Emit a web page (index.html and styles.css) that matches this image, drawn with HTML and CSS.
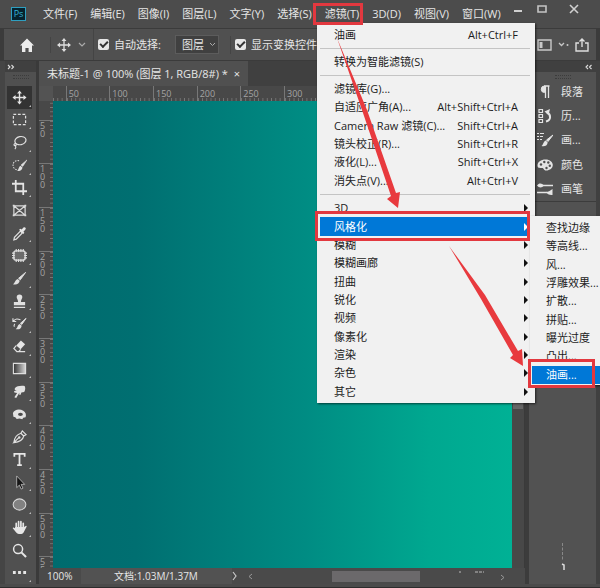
FILE: index.html
```html
<!DOCTYPE html>
<html lang="zh-CN">

<head>
    <meta charset="UTF-8">
    <meta name="viewport" content="width=device-width, initial-scale=1.0">
    <title>未标题-1</title>
    <link rel="stylesheet" href="styles.css">
</head>

<body>
    <div class="window">
        <header class="menubar">
            <span class="logo">Ps</span>
            <nav class="menus">
                <button>文件(F)</button>
                <button>编辑(E)</button>
                <button>图像(I)</button>
                <button>图层(L)</button>
                <button>文字(Y)</button>
                <button>选择(S)</button>
                <button class="open">滤镜(T)</button>
                <button>3D(D)</button>
                <button>视图(V)</button>
                <button>窗口(W)</button>
            </nav>
            <div class="window-buttons">
                <button aria-label="最小化"><svg width="12" height="12" viewBox="0 0 12 12"><path d="M2 8h8" stroke="#d0d0d0" stroke-width="2"/></svg></button>
                <button aria-label="还原"><svg width="12" height="12" viewBox="0 0 12 12"><path d="M2 3h8v6H2z" fill="none" stroke="#c4c4c4" stroke-width="1.6"/></svg></button>
                <button aria-label="关闭"><svg width="12" height="12" viewBox="0 0 12 12"><path d="M2 2l8 8M10 2l-8 8" stroke="#d0d0d0" stroke-width="1.6"/></svg></button>
            </div>
        </header>

        <div class="options">
            <button class="home" aria-label="主页"><svg width="16" height="16" viewBox="0 0 16 16"><path d="M8 1.5L15 8.6h-2V15H9.6v-4H6.4v4H3V8.6H1z" fill="#ececec"/></svg></button>
            <button class="current-tool" aria-label="移动工具">
                <svg width="14" height="14" viewBox="0 0 16 16"><path d="M8 2v12M2 8h12" stroke="#dedede" stroke-width="1.5"/><path d="M8 0l2.8 3.5H5.2zM8 16l2.8-3.5H5.2zM0 8l3.5-2.8v5.6zM16 8l-3.5-2.8v5.6z" fill="#dedede"/></svg>
                <svg width="8" height="6" viewBox="0 0 8 6"><path d="M1 1l3 3 3-3" fill="none" stroke="#aaa" stroke-width="1.2"/></svg>
            </button>
            <label class="check"><input type="checkbox" checked>自动选择:</label>
            <select class="target" aria-label="自动选择">
                <option>图层</option>
                <option>组</option>
            </select>
            <label class="check second"><input type="checkbox" checked>显示变换控件</label>
            <div class="options-right">
                <button aria-label="工作区"><svg width="16" height="14" viewBox="0 0 16 14"><path d="M1 2h13v10H1z" fill="none" stroke="#c8c8c8" stroke-width="1.4"/><path d="M2.5 4h3v6h-3z" fill="#c8c8c8"/></svg></button>
                <button aria-label="更多"><svg width="12" height="8" viewBox="0 0 12 8"><path d="M1 2l2.5 2.5L6 2" fill="none" stroke="#c8c8c8" stroke-width="1.3"/><circle cx="9.5" cy="4" r="1" fill="#c8c8c8"/></svg></button>
                <button aria-label="共享"><svg width="14" height="14" viewBox="0 0 14 14"><path d="M4 5H1v8h12V5h-3M7 9V1M4.5 3.5L7 1l2.5 2.5" fill="none" stroke="#dedede" stroke-width="1.4"/></svg></button>
            </div>
        </div>

        <main class="workspace">
            <aside class="toolbox">
                <div class="dock-head"><svg width="8" height="6" viewBox="0 0 8 6"><path d="M1 1l2 2-2 2M4.5 1l2 2-2 2" fill="none" stroke="#ddd" stroke-width="1.1"/></svg></div>
                <div class="grip"></div>
                <div class="tools">
                    <button class="tool active" aria-label="移动"><svg viewBox="0 0 16 16"><path d="M8 2v12M2 8h12" stroke="#e4e4e4" stroke-width="1.5"/><path d="M8 .5l2.6 3.3H5.4zM8 15.5l2.6-3.3H5.4zM.5 8l3.3-2.6v5.2zM15.5 8l-3.3-2.6v5.2z" fill="#e4e4e4"/></svg></button>
                    <button class="tool" aria-label="矩形选框"><svg viewBox="0 0 16 16"><path d="M1.5 2.5h13v11h-13z" fill="none" stroke="#e0e0e0" stroke-width="1.3" stroke-dasharray="3 1.8"/></svg></button>
                    <button class="tool" aria-label="套索"><svg viewBox="0 0 16 16"><ellipse cx="9" cy="6" rx="6" ry="4.3" fill="none" stroke="#e0e0e0" stroke-width="1.3" transform="rotate(-12 9 6)"/><path d="M4 9c-2 0-2.5 2-1 2.3 2 .3 2-2 .6-2.3M3.5 11.5c1 1 .6 2.5-.5 3.5" fill="none" stroke="#e0e0e0" stroke-width="1.2"/></svg></button>
                    <button class="tool" aria-label="快速选择"><svg viewBox="0 0 16 16"><path d="M5 12.5A5 5 0 1 1 8 3" fill="none" stroke="#e0e0e0" stroke-width="1.1" stroke-dasharray="1.6 1.2"/><path d="M16 2l-4.600 7-1.8-1.5z" fill="#e0e0e0" stroke="#e0e0e0" stroke-width=".6"/><path d="M9 8.3l2.2 1.9c-.5 3.3-3 4-5.7 3.3 1.7-.8 1.5-4.300 3.5-5.200z" fill="#e0e0e0"/></svg></button>
                    <button class="tool" aria-label="裁剪"><svg viewBox="0 0 16 16"><path d="M4 0v12h12M0 4h12v12" fill="none" stroke="#e4e4e4" stroke-width="1.9"/></svg></button>
                    <button class="tool plain" aria-label="图框"><svg viewBox="0 0 16 16"><path d="M2 3h12v10H2zM2 3l12 10M14 3L2 13" fill="none" stroke="#dadada" stroke-width="1.3"/><path d="M.8 1.8h2v2h-2zM13.2 1.8h2v2h-2zM.8 12.2h2v2h-2zM13.2 12.2h2v2h-2z" fill="#dadada"/></svg></button>
                    <button class="tool" aria-label="吸管"><svg viewBox="0 0 16 16"><path d="M9 5.5l2 2L4.5 14l-2.5.7L2.6 12z" fill="none" stroke="#e0e0e0" stroke-width="1.3"/><path d="M7.500 4l1.500-1 1.300.700L12 1.800c1.600-1.500 3.600.5 2.300 2L12.200 6l1 1.200-1.200 1.300z" fill="#e6e6e6"/></svg></button>
                    <button class="tool" aria-label="修补"><svg viewBox="0 0 16 16"><rect x="2" y="3" width="12" height="10" rx="2" fill="#6c6c6c" stroke="#e0e0e0" stroke-width="1.4"/><path d="M4.500 1v3M7 1v3M9.500 1v3M12 1v3M4.500 12v3M7 12v3M9.500 12v3M12 12v3M0 5.500h3M0 8h3M0 10.500h3M13 5.500h3M13 8h3M13 10.500h3" stroke="#e0e0e0" stroke-width="1.2"/></svg></button>
                    <button class="tool" aria-label="画笔"><svg viewBox="0 0 16 16"><path d="M14.5 1.5L8.800 9.400 7 7.800z" fill="#e0e0e0" stroke="#e0e0e0"/><path d="M6.200 8.600l2 1.900c-.4 3.400-3.500 4.400-7.200 3.600 2.500-1 2-4.700 5.200-5.500z" fill="#e0e0e0"/></svg></button>
                    <button class="tool" aria-label="仿制图章"><svg viewBox="0 0 16 16"><path d="M5 3.500a3 3 0 0 1 6 0c0 1.800-1.500 2.500-1.500 5H14v3.500H2V8.500h4.500C6.500 6 5 5.300 5 3.500zM2 13.500h12V15H2z" fill="#e0e0e0"/></svg></button>
                    <button class="tool" aria-label="历史记录画笔"><svg viewBox="0 0 16 16"><path d="M15 2.500L10.500 9 9 7.800z" fill="#e0e0e0" stroke="#e0e0e0"/><path d="M8.300 8.600l2 1.700c-.3 3.200-2.800 4.500-6.300 3.700 2.300-1 1.500-4.400 4.300-5.400z" fill="#e0e0e0"/><path d="M1.500 5.500C4 2.500 6 3 9 4M1 2.500v3.300h3.500M3 8.500c-1 1-1 2-.5 3" fill="none" stroke="#e0e0e0" stroke-width="1.2"/></svg></button>
                    <button class="tool" aria-label="橡皮擦"><svg viewBox="0 0 16 16"><path d="M9.500 1.500l4.500 4L9.200 11 4.500 7z" fill="#e6e6e6"/><path d="M4.500 7L2 10l3.200 3.500h2L9.200 11M7 13.500h7" fill="none" stroke="#e0e0e0" stroke-width="1.3"/></svg></button>
                    <button class="tool" aria-label="渐变"><svg viewBox="0 0 16 16"><defs><linearGradient id="grad"><stop offset="0" stop-color="#333"/><stop offset="1" stop-color="#d8d8d8"/></linearGradient></defs><path d="M1.500 2.500h13v11h-13z" fill="url(#grad)" stroke="#dedede" stroke-width="1.2"/></svg></button>
                    <button class="tool" aria-label="涂抹"><svg viewBox="0 0 16 16"><path d="M3 4.500C5 2 9 1.500 13.500 2c1 2 .8 4.500-.5 6.500l-3 .5-.8 2.500-1.600 0 .3-2.300L4.500 15 2.500 14l3-4.500L2.500 9l-.3-1.500L5 7.300 3 6.500z" fill="#e2e2e2"/></svg></button>
                    <button class="tool" aria-label="海绵"><svg viewBox="0 0 16 16"><path d="M1 6.500C2.500 2.500 8 1.500 12 4c2.500 1.600 3.500 4 2.500 7l-2.500.5-1 1.500-3-.8-3 .5-1.500-1.700-2-.5z" fill="#e2e2e2"/><ellipse cx="9" cy="7.800" rx="2.600" ry="1.700" fill="#4a4a4a"/></svg></button>
                    <button class="tool" aria-label="钢笔"><svg viewBox="0 0 16 16"><path d="M2 14.500C2.500 9 4.500 6 9.500 4.500l3 3C11.500 12 8 13.800 2 14.500L7 9.500M9.500 4.500L11 2l4 4-2.500 1.500" fill="none" stroke="#e0e0e0" stroke-width="1.3"/><circle cx="7.700" cy="9" r="1.300" fill="#e0e0e0"/></svg></button>
                    <button class="tool" aria-label="文字"><svg viewBox="0 0 16 16"><path d="M2.500 5V2h11v3M8 2v12M5.500 14h5" fill="none" stroke="#e6e6e6" stroke-width="1.9"/></svg></button>
                    <button class="tool" aria-label="路径选择"><svg viewBox="0 0 16 16"><path d="M5 1l8.500 9H9.700l2 4-1.900 1-2-4.200L5 13.500z" fill="#161616" stroke="#c8c8c8" stroke-width=".8"/></svg></button>
                    <button class="tool" aria-label="椭圆"><svg viewBox="0 0 16 16"><ellipse cx="8" cy="8" rx="6.800" ry="6" fill="#818181" stroke="#d8d8d8" stroke-width="1.1"/></svg></button>
                    <button class="tool" aria-label="抓手"><svg viewBox="0 0 16 16"><path d="M4.500 9V3.600M7 8V1.800M9.500 8V1.800M12 9V3.500" stroke="#e6e6e6" stroke-width="1.800" stroke-linecap="round"/><path d="M3.600 7.500h9.300L15 6.200c.8.2.8.800.4 1.300L12.500 13c-1 2.500-6 2.700-8 .3L.8 8.800C.8 7.700 2 7.500 3 8.800z" fill="#e6e6e6"/></svg></button>
                    <button class="tool plain" aria-label="缩放"><svg viewBox="0 0 16 16"><circle cx="6.500" cy="6.500" r="4.800" fill="none" stroke="#e6e6e6" stroke-width="1.6"/><path d="M10 10l5 5" stroke="#e6e6e6" stroke-width="2.2"/></svg></button>
                    <button class="tool" aria-label="编辑工具栏"><svg viewBox="0 0 16 16"><path d="M1 6.500h3v3H1zM6.500 6.500h3v3h-3zM12 6.500h3v3h-3z" fill="#e6e6e6"/></svg></button>
                </div>
            </aside>

            <section class="document">
                <div class="tabs">
                    <button class="tab">未标题-1 @ 100% (图层 1, RGB/8#) * <span class="close">×</span></button>
                </div>
                <div class="view">
                    <div class="corner"></div>
                    <div class="ruler top">
                        <div class="scale">
                            <span></span><span>50</span><span>100</span><span>150</span><span>200</span><span>250</span><span>300</span><span></span><span></span><span></span><span></span><span></span>
                        </div>
                    </div>
                    <div class="ruler left">
                        <div class="scale">
                            <span></span><span>50</span><span>100</span><span>150</span><span>200</span><span>250</span><span>300</span><span>350</span><span>400</span><span>450</span><span>500</span><span>55</span>
                        </div>
                    </div>
                    <div class="canvas"></div>
                    <div class="vscroll"><div class="vthumb"></div></div>
                </div>
                <footer class="status">
                    <span class="zoom">100%</span>
                    <span class="size">文档:1.03M/1.37M</span>
                    <svg class="more" width="6" height="10" viewBox="0 0 6 10"><path d="M1 1l3 4-3 4" fill="none" stroke="#c8c8c8" stroke-width="1.2"/></svg>
                    <div class="hscroll">
                        <svg width="5" height="7" viewBox="0 0 5 7"><path d="M4 1L1 3.500 4 6" fill="none" stroke="#999"/></svg>
                        <div class="track"><div class="hthumb"></div></div>
                        <svg width="60" height="12" viewBox="0 0 60 12"><path d="M5 2h2" stroke="#bbb"/><path d="M21 2h9" stroke="#bbb" stroke-dasharray="3 1"/><path d="M47 5l3 2.500-3 2.500" fill="none" stroke="#999"/></svg>
                    </div>
                </footer>
            </section>

            <aside class="panels">
                <div class="dock-head right"><svg width="8" height="6" viewBox="0 0 8 6"><path d="M3 1L1 3l2 2M6.500 1l-2 2 2 2" fill="none" stroke="#ddd" stroke-width="1.1"/></svg></div>
                <div class="grip"></div>
                <div class="panel-list">
                    <button><svg viewBox="0 0 16 16"><path d="M7.500 2v6.500a3.200 3.200 0 0 1 0-6.500z" fill="#e4e4e4" stroke="#e4e4e4"/><path d="M8.500 2v12M11.500 2v12M7 2h5.500" stroke="#e4e4e4" stroke-width="1.3"/></svg>段落</button>
                    <button><svg viewBox="0 0 16 16"><path d="M2 1.500h3.500v3H2zM2 6.500h3.500v3H2zM2 11.500h3.500v3H2z" fill="none" stroke="#e4e4e4" stroke-width="1.2"/><path d="M9 13.500c5.500-1.500 5-7 1-9" fill="none" stroke="#e4e4e4" stroke-width="2"/><path d="M7.500 3.500L13 1l-1.500 6z" fill="#e4e4e4"/></svg>历...</button>
                    <button><svg viewBox="0 0 16 16"><path d="M0 1.500h2M3 1.500h4M0 4.500h2M3 4.500h3M0 7.500h2M3 7.500h2" stroke="#e4e4e4" stroke-width="1.1"/><path d="M16 3l-5 6.500L9.500 8z" fill="#e4e4e4" stroke="#e4e4e4"/><path d="M8.700 8.500l2 1.900c-.5 3.300-3 4.300-6.200 3.600 2-1 1.500-4.500 4.200-5.500z" fill="#e4e4e4"/></svg>画...</button>
                    <button><svg viewBox="0 0 16 16"><path d="M8.500 2.500c4.500 0 7.300 2.500 7.300 5.500s-2.800 5.500-6.800 5.500c-2.500 0-2-2.500-3.800-2.500C3 11 .5 11.200.5 8.500c0-3.500 3.500-6 8-6z" fill="#e4e4e4"/><circle cx="4" cy="7.500" r="1.200" fill="#505050"/><circle cx="7.300" cy="5" r="1.200" fill="#505050"/><circle cx="11.300" cy="5.500" r="1.200" fill="#505050"/><circle cx="12.800" cy="8.800" r="1.200" fill="#505050"/><circle cx="9.500" cy="11" r="1.200" fill="#505050"/></svg>颜色</button>
                    <button><svg viewBox="0 0 16 16"><path d="M6 4.500h10M0 11.500h10" stroke="#e4e4e4" stroke-width="1.5"/><path d="M0 4.500C2 1.500 5 2 7 4.500 5 7 2 7 0 4.500zM15.500 8v6c-3 .3-5.500-1-6.500-3 2 0 4-1 6.500-3z" fill="#e4e4e4"/></svg>画笔</button>
                </div>
                <div class="panel-rest">
                    <svg width="6" height="30" viewBox="0 0 6 30"><path d="M2.500 1v17" stroke="#888" stroke-dasharray="3 1.5"/><path d="M2 22l2 1v5" fill="none" stroke="#ddd" stroke-width="1.5"/></svg>
                </div>
            </aside>
        </main>
    </div>

    <!-- Filter menu -->
    <div class="menu filter-menu">
        <button class="item">油画<kbd>Alt+Ctrl+F</kbd></button>
        <hr>
        <button class="item">转换为智能滤镜(S)</button>
        <hr>
        <div class="group six">
            <button class="item">滤镜库(G)...</button>
            <button class="item">自适应广角(A)...<kbd>Alt+Shift+Ctrl+A</kbd></button>
            <button class="item">Camera Raw 滤镜(C)...<kbd>Shift+Ctrl+A</kbd></button>
            <button class="item">镜头校正(R)...<kbd>Shift+Ctrl+R</kbd></button>
            <button class="item">液化(L)...<kbd>Shift+Ctrl+X</kbd></button>
            <button class="item">消失点(V)...<kbd>Alt+Ctrl+V</kbd></button>
        </div>
        <hr>
        <div class="group eleven">
            <button class="item more">3D</button>
            <button class="item more selected">风格化</button>
            <button class="item more">模糊</button>
            <button class="item more">模糊画廊</button>
            <button class="item more">扭曲</button>
            <button class="item more">锐化</button>
            <button class="item more">视频</button>
            <button class="item more">像素化</button>
            <button class="item more">渲染</button>
            <button class="item more">杂色</button>
            <button class="item more">其它</button>
        </div>
    </div>

    <!-- Stylize submenu -->
    <div class="menu submenu">
        <div class="group nine">
            <button class="item">查找边缘</button>
            <button class="item">等高线...</button>
            <button class="item">风...</button>
            <button class="item">浮雕效果...</button>
            <button class="item">扩散...</button>
            <button class="item">拼贴...</button>
            <button class="item">曝光过度</button>
            <button class="item">凸出...</button>
            <button class="item selected">油画...</button>
        </div>
    </div>

    <!-- Red marks over the menus -->
    <svg class="marks" width="600" height="588" viewBox="0 0 600 588">
        <g fill="none" stroke="#e2383f" stroke-width="3">
            <rect x="314.5" y="4.5" width="47" height="19"/>
            <rect x="316.5" y="212.5" width="212" height="27"/>
            <rect x="529.5" y="360.5" width="64" height="26"/>
        </g>
        <path d="M337 38L367 110 396 193 400 192 398 208 387 199 391 196 362 110z" fill="#e83a3e"/>
        <path d="M449 246L485 295 518 351 522 349 523 366 510 358 513 355 481 299z" fill="#e83a3e"/>
    </svg>
</body>

</html>
```

FILE: styles.css
```css
* {
    box-sizing: border-box;
}

body {
    margin: 0;
    position: relative;
    overflow: hidden;
    background-color: #4b4b4b;
    color: #e6e6e6;
    font-family: "Open Sans", "Noto Sans CJK SC", sans-serif;
    font-size: 11px;
    line-height: 18px;
}

button {
    margin: 0;
    padding: 0;
    border: none;
    background: none;
    color: inherit;
    font: inherit;
    text-align: left;
    white-space: nowrap;
}

svg {
    display: block;
    flex: none;
}

.window {
    display: flex;
    flex-direction: column;
    height: 100vh;
    padding-bottom: 3px;
    border-bottom: 1px solid #2c2c2c;
}

/* menu bar */
.menubar {
    display: flex;
    align-items: center;
    height: 28px;
    padding-left: 11px;
    background-color: #4c4c4c;
}

.logo {
    flex: none;
    width: 15px;
    height: 14px;
    margin-right: 17px;
    border: 1px solid #2f9fc0;
    background-color: #06222e;
    color: #35b3d8;
    font-size: 9px;
    line-height: 12px;
    text-align: center;
}

.menus {
    display: flex;
    gap: 13px;
}

.window-buttons {
    display: flex;
    gap: 12px;
    margin-left: auto;
    padding: 0 20px 10px 0;
}

.window-buttons button:last-child {
    margin-left: 8px;
}

/* options bar */
.options {
    display: flex;
    align-items: center;
    height: 33px;
    border: 1px solid #3b3b3b;
    border-width: 1px 4px 1px 4px;
    background-color: #505050;
}

.home {
    padding: 0 15px;
    border-right: 1px solid #444;
}

.current-tool {
    display: flex;
    align-items: center;
    gap: 7px;
    height: 31px;
    padding: 0 7px 0 6px;
    border-right: 1px solid #444;
}

.check {
    display: flex;
    align-items: center;
    gap: 5px;
    padding-left: 4px;
    white-space: nowrap;
}

.check.second {
    margin-left: 11px;
    border-left: 1px solid #444;
}

.check input {
    appearance: none;
    width: 11px;
    height: 11px;
    margin: 0;
    border-radius: 2px;
    background-color: #e6e6e6;
}

.check input:checked::after {
    content: "";
    display: block;
    width: 6px;
    height: 3px;
    margin: 3px;
    border: solid #333;
    border-width: 0 0 2px 2px;
    transform: translate(-1px, -1px) rotate(-45deg);
}

.target {
    appearance: none;
    width: 44px;
    height: 19px;
    margin-left: 14px;
    padding: 0 6px;
    border: 1px solid #5c5c5c;
    border-radius: 0;
    background: #404040 url("data:image/svg+xml,%3Csvg xmlns='http://www.w3.org/2000/svg' width='7' height='5'%3E%3Cpath d='M1 1l2.5 2.5L6 1' fill='none' stroke='%23aaa'/%3E%3C/svg%3E") right 2px center no-repeat;
    color: #e6e6e6;
    font: inherit;
    line-height: 16px;
}

.options-right {
    display: flex;
    align-items: center;
    gap: 5px;
    margin-left: auto;
    padding-right: 7px;
}

/* work area */
.workspace {
    display: flex;
    flex: 1;
    min-height: 0;
}

.toolbox {
    display: flex;
    flex-direction: column;
    width: 39px;
    border-left: 5px solid #454545;
    border-right: 3px solid #3a3a3a;
    background-color: #505050;
}

.dock-head {
    display: flex;
    align-items: center;
    height: 11px;
    padding-left: 2px;
    background-color: #404040;
}

.dock-head.right {
    justify-content: flex-end;
    padding-right: 3px;
}

.grip {
    flex: none;
    width: 16px;
    height: 4px;
    margin: 3px auto 7px;
    border-top: 1px dotted #3c3c3c;
    border-bottom: 1px dotted #3c3c3c;
}

.tools {
    display: grid;
    grid-auto-rows: 1fr;
    flex: 1;
}

.tool {
    display: flex;
    align-items: center;
    justify-content: center;
    position: relative;
    margin: 0 4px 0 2px;
}

.tool svg {
    width: 15px;
    height: 15px;
}

.tool.active {
    background-color: #333;
}

.tool::after {
    content: "";
    position: absolute;
    right: 1px;
    bottom: 2px;
    border: 1px solid #bbb;
    border-top-color: transparent;
    border-left-color: transparent;
}

.tool.plain::after {
    display: none;
}

.document {
    display: flex;
    flex: 1;
    flex-direction: column;
    min-width: 0;
}

.tabs {
    display: flex;
    height: 25px;
    background-color: #404040;
}

.tab {
    padding: 0 8px;
    background-color: #505050;
}

.close {
    margin-left: 3px;
}

.view {
    display: grid;
    grid-template: 15px 1fr / 14px 1fr 13px;
    flex: 1;
    min-height: 0;
}

.corner {
    background-color: #535353;
}

.ruler {
    overflow: hidden;
    background-color: #484848;
    color: #a4a4a4;
    font-size: 9px;
    line-height: 9px;
}

.ruler.top {
    grid-column: 2 / 4;
}

.scale {
    display: grid;
}

.ruler.top .scale {
    grid-auto-flow: column;
    grid-auto-columns: 1fr;
    width: 524px;
    height: 15px;
    margin-left: -31px;
}

.ruler.top span {
    padding: 3px 0 0 2px;
    border-left: 1px solid #777;
    background: linear-gradient(to right, #777 1px, transparent 1px) left bottom / 10% 3px repeat-x;
}

.ruler.left .scale {
    grid-auto-rows: 1fr;
    height: 524px;
    margin-top: -25px;
}

.ruler.left span {
    padding: 1px 8px 0 1px;
    border-top: 1px solid #777;
    background: linear-gradient(to bottom, #777 1px, transparent 1px) right top / 3px 10% repeat-y;
    line-height: 8px;
    word-break: break-all;
}

.canvas {
    background: linear-gradient(to right, #006b6e, #006f71 18%, #008c83 55%, #00a890 82%, #00b195);
}

.vscroll {
    display: flex;
    flex-direction: column;
    border-right: 1px solid #3a3a3a;
    background-color: #484848;
}

.vthumb {
    height: 66%;
    margin: 0 1px;
    background-color: #666;
}

.status {
    display: flex;
    align-items: center;
    height: 16px;
    padding-left: 8px;
    background-color: #4a4a4a;
    font-size: 10px;
    line-height: 16px;
}

.zoom {
    width: 34px;
}

.size {
    width: 151px;
    padding-left: 33px;
    background-color: #525252;
}

.status .more {
    margin-right: 10px;
}

.hscroll {
    display: flex;
    align-items: center;
    flex: 1;
}

.track {
    flex: 1;
    padding-left: 79px;
}

.hthumb {
    width: 88px;
    height: 11px;
    background-color: #6b696b;
}

.hscroll svg:last-child {
    margin-right: 11px;
}

.panels {
    display: flex;
    flex-direction: column;
    width: 75px;
    border-left: 4px solid #3c3c3c;
    border-right: 4px solid #404040;
    background-color: #525252;
}

.panel-list {
    display: grid;
    grid-auto-rows: 1fr;
    min-height: 122px;
    margin-top: -6px;
    border-bottom: 1px solid #3c3c3c;
}

.panel-list button {
    display: flex;
    align-items: center;
    gap: 8px;
    padding-left: 8px;
}

.panel-list svg {
    width: 16px;
    height: 16px;
}

.panel-rest {
    display: flex;
    flex: 1;
    align-items: flex-end;
    justify-content: center;
    padding-bottom: 12px;
}

/* drop-down menus */
.menu {
    position: absolute;
    background-color: #f1f1f1;
    color: #1c1c1c;
    box-shadow: 1px 1px 2px rgba(0, 0, 0, 0.6);
}

.filter-menu {
    top: 23px;
    left: 317px;
    width: 218px;
    padding: 3px 5px 2px 3px;
}

.submenu {
    top: 216px;
    left: 530px;
    right: 0;
    padding: 3px 0 1px 2px;
}

.menu hr {
    height: 1px;
    margin: 4px 0;
    border: none;
    background-color: #c4c4c4;
}

.group {
    display: grid;
    grid-auto-rows: 1fr;
    grid-template-columns: minmax(0, 1fr);
}

.six {
    min-height: 110px;
}

.nine {
    min-height: 165px;
}

.eleven {
    min-height: 202px;
}

.item {
    display: flex;
    align-items: center;
    justify-content: space-between;
    width: 100%;
    height: 18px;
    padding: 0 12px 0 14px;
}

.group .item {
    height: auto;
}

.submenu .item {
    padding-right: 0;
}

.item kbd {
    font: inherit;
}

.item.more {
    padding-right: 2px;
}

.item.more::after {
    content: "";
    border: solid transparent;
    border-width: 4px 0 4px 4px;
    border-left-color: #111;
}

.item.selected {
    background-color: #0078d7;
    color: #fff;
}

.item.more.selected::after {
    border-left-color: #fff;
}

.marks {
    position: absolute;
    top: 0;
    left: 0;
    pointer-events: none;
}
```
